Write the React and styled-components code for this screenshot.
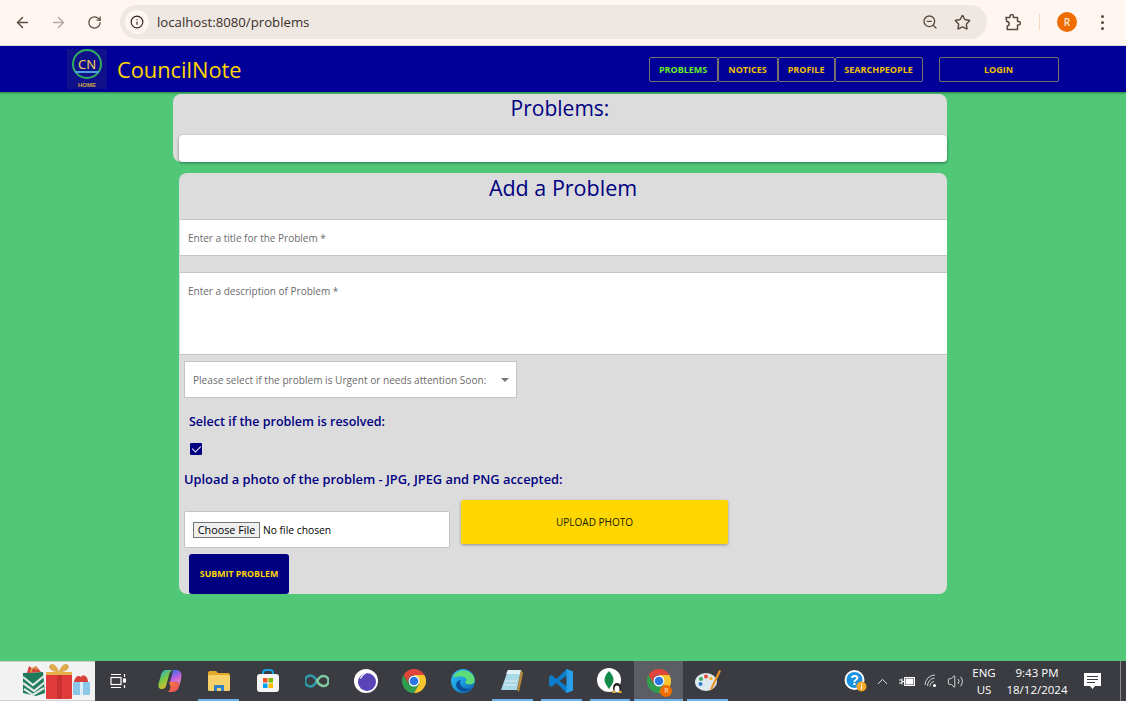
import React from 'react';
import styled, { createGlobalStyle } from 'styled-components';
import { ArrowLeft, ArrowRight, RotateCw, Info, ZoomOut, Star, ChevronUp, Volume2 } from 'lucide-react';

const UI_FONT = `"Open Sans", "Noto Sans", "Liberation Sans", sans-serif`;

const NAV_ITEMS = [
  { label: 'Problems', width: 69, active: true },
  { label: 'Notices', width: 60 },
  { label: 'Profile', width: 57 },
  { label: 'SearchPeople', width: 88 },
];

function App() {
  return (
    <Page>
      <GlobalStyle />
      <BrowserBar>
        <BarIcon $color="#5a4a3f"><ArrowLeft size={17} /></BarIcon>
        <BarIcon $color="#b5aaa3"><ArrowRight size={17} /></BarIcon>
        <BarIcon $color="#5a4a3f"><RotateCw size={15} /></BarIcon>
        <UrlPill>
          <SiteInfo><Info size={14} color="#2e2622" /></SiteInfo>
          <UrlText>localhost:8080/problems</UrlText>
          <PillIcons>
            <ZoomOut size={16} color="#5a4a3f" />
            <Star size={17} color="#5a4a3f" />
          </PillIcons>
        </UrlPill>
        <BrowserRight>
          <svg width="17" height="17" viewBox="0 0 17 17" fill="none" stroke="#5a4a3f" strokeWidth="1.500" strokeLinejoin="round">
            <path d="M1 3.500h4V2.300a1.700 1.700 0 013.400 0v1.200h4.100v4h1.200a1.700 1.700 0 010 3.400h-1.200V15.500H2.200V12c1.500 0 2-1 2-2.200S3.300 7.500 1.800 7.500z" />
          </svg>
          <BarDivider />
          <Avatar>R</Avatar>
          <MenuDots><i /><i /><i /></MenuDots>
        </BrowserRight>
      </BrowserBar>

      <NavBar>
        <LogoBox>
          <svg width="34" height="40" viewBox="0 0 34 40">
            <circle cx="17" cy="15" r="14" fill="#10108a" stroke="#2fae5f" strokeWidth="2" />
            <text x="17" y="20" textAnchor="middle" fontSize="13" fontFamily="Noto Sans, sans-serif" fill="#f0d060">CN</text>
            <rect x="5" y="22" width="24" height="2" fill="#4aa3e0" />
            <text x="17" y="38" textAnchor="middle" fontSize="6" fontWeight="700" fontFamily="Liberation Sans, sans-serif" fill="#c9a93a">HOME</text>
          </svg>
        </LogoBox>
        <Brand>CouncilNote</Brand>
        <NavLinks>
          {NAV_ITEMS.map(item => (
            <NavButton key={item.label} $width={item.width} $active={item.active}>{item.label}</NavButton>
          ))}
        </NavLinks>
        <LoginButton>Login</LoginButton>
      </NavBar>

      <Main>
        <ProblemsCard>
          <CardTitle>Problems:</CardTitle>
          <EmptyList />
        </ProblemsCard>

        <FormCard>
          <FormTitle>Add a Problem</FormTitle>
          <TitleInput placeholder="Enter a title for the Problem *" />
          <DescInput placeholder="Enter a description of Problem *" />
          <SelectWrap>
            <Select defaultValue="">
              <option value="" disabled>Please select if the problem is Urgent or needs attention Soon:</option>
              <option>Urgent</option>
              <option>Soon</option>
            </Select>
            <Caret />
          </SelectWrap>
          <ResolvedLabel>Select if the problem is resolved:</ResolvedLabel>
          <CheckRow><Check type="checkbox" defaultChecked /></CheckRow>
          <UploadLabel>Upload a photo of the problem - JPG, JPEG and PNG accepted:</UploadLabel>
          <UploadRow>
            <FileBox><input type="file" /></FileBox>
            <UploadButton>Upload Photo</UploadButton>
          </UploadRow>
          <SubmitButton>Submit Problem</SubmitButton>
        </FormCard>
      </Main>

      <Taskbar>
        <StartArea>
          <svg width="74" height="36" viewBox="0 0 74 36">
            <path d="M5 10l20-1 2 21-9 3-13-3z" fill="#1f7a5a" />
            <path d="M5 14l10 8 11-9M5 20l11 8 11-9M6 26l9 6 11-7" stroke="#dfe8e4" strokeWidth="2.200" fill="none" />
            <path d="M9 10l2-7 4 3 3-3 5 6z" fill="#d8403a" />
            <path d="M13 9c0-5 5-6 6-2" fill="none" stroke="#d9a74a" strokeWidth="1.500" />
            <rect x="28" y="9" width="26" height="27" rx="1" fill="#e03a3a" />
            <rect x="39" y="9" width="5" height="27" fill="#c93030" />
            <rect x="28" y="9" width="26" height="3" fill="#e8b04a" />
            <path d="M41 9c-7 0-12-4-9-7s8 2 9 7c1-5 6-10 9-7s-2 7-9 7z" fill="#dbab4e" />
            <rect x="55" y="19" width="17" height="13" rx="1" fill="#8cc7ea" />
            <rect x="62" y="19" width="3" height="13" fill="#dceef9" />
            <path d="M56 19c1-6 5-7 7-5 2-3 7-1 7 5z" fill="#d8403a" />
          </svg>
        </StartArea>
        <TaskView>
          <svg width="16" height="16" viewBox="0 0 16 16" fill="none" stroke="#fff" strokeWidth="1.200">
            <path d="M1 1.500h10M1 14.500h10" />
            <rect x="1" y="4.500" width="10" height="7" />
            <path d="M14.500 1v3M14.500 12v3" />
            <rect x="13.500" y="6" width="2" height="3" fill="#fff" />
          </svg>
        </TaskView>
        <TaskApp>
          <svg width="24" height="24" viewBox="0 0 24 24">
            <defs>
              <linearGradient id="cp" x1="0" y1="0" x2="0.600" y2="1">
                <stop offset="0" stopColor="#19b5e8" />
                <stop offset="0.5" stopColor="#7ac943" />
                <stop offset="1" stopColor="#f5b52e" />
              </linearGradient>
              <linearGradient id="cp2" x1="0.300" y1="0" x2="0.700" y2="1">
                <stop offset="0" stopColor="#3a6ff0" />
                <stop offset="0.5" stopColor="#c05fe0" />
                <stop offset="1" stopColor="#f08ab0" />
              </linearGradient>
              <linearGradient id="cp3" x1="0" y1="0" x2="1" y2="1">
                <stop offset="0" stopColor="#f5862e" />
                <stop offset="1" stopColor="#e8476a" />
              </linearGradient>
            </defs>
            <path d="M8 1h8c-3 0-4 1.500-5 5l-3 11c-.5 2-2 3-4 3-3 0-4-2-3.500-5L3 6c.7-3 2.500-5 5-5z" fill="url(#cp)" />
            <path d="M15 1h3c3.500 0 5.800 2.500 5.500 6-.3 3-1 6-2 9-.8-2-2-3-4.500-3h-5l2-7c.5-2.500 1-5 1-5z" fill="url(#cp2)" />
            <path d="M11 13h5c3 0 5 1 5.500 3-.7 4-3 7-7 7H8c3 0 4-2 4.500-5z" fill="url(#cp3)" />
          </svg>
        </TaskApp>
        <TaskApp $underline>
          <svg width="22" height="20" viewBox="0 0 22 20">
            <path d="M0 2c0-1 .5-2 2-2h6l2 2h10c1 0 2 1 2 2v2H0z" fill="#e3a92c" />
            <rect y="4" width="22" height="16" rx="1.500" fill="#f7d26a" />
            <path d="M7 14h8a1 1 0 011 1v5H6v-5a1 1 0 011-1z" fill="#2f80c9" />
            <rect x="9" y="17" width="4" height="3" fill="#f7d26a" />
          </svg>
        </TaskApp>
        <TaskApp>
          <svg width="24" height="24" viewBox="0 0 24 24">
            <path d="M7 6V4a3 3 0 013-3h4a3 3 0 013 3v2" fill="none" stroke="#1ba1e2" strokeWidth="2" />
            <rect x="1" y="5" width="22" height="18" rx="3" fill="#f5f5f5" />
            <rect x="7" y="9" width="4.500" height="4.500" fill="#f25022" />
            <rect x="12.500" y="9" width="4.500" height="4.500" fill="#7fba00" />
            <rect x="7" y="14.500" width="4.500" height="4.500" fill="#00a4ef" />
            <rect x="12.500" y="14.500" width="4.500" height="4.500" fill="#ffb900" />
          </svg>
        </TaskApp>
        <TaskApp>
          <svg width="24" height="14" viewBox="0 0 24 14" fill="none" strokeWidth="2.600">
            <path d="M12 7C10 3.500 8 1.500 5.500 1.500a5.500 5.500 0 000 11C8 12.500 10 10.500 12 7z" stroke="#2c9aa8" />
            <path d="M12 7c2-3.500 4-5 6.500-5a5 5 0 010 10C16 12 14 10.500 12 7z" stroke="#7fc8a0" />
          </svg>
        </TaskApp>
        <TaskApp>
          <svg width="24" height="24" viewBox="0 0 24 24">
            <circle cx="12" cy="12" r="12" fill="#fff" />
            <circle cx="13" cy="13" r="9" fill="#5a45b8" />
            <path d="M6 9c1-3 4-5 7-5-2 1-5 3-6 6z" fill="#fff" />
          </svg>
        </TaskApp>
        <TaskApp><ChromeIcon /></TaskApp>
        <TaskApp>
          <svg width="24" height="24" viewBox="0 0 24 24">
            <defs>
              <linearGradient id="edge" x1="0" y1="0" x2="1" y2="1">
                <stop offset="0" stopColor="#35c1f1" />
                <stop offset="0.5" stopColor="#1b9de2" />
                <stop offset="1" stopColor="#0c59a4" />
              </linearGradient>
            </defs>
            <circle cx="12" cy="12" r="12" fill="url(#edge)" />
            <path d="M2 8C5 1 15-1 21 5c3 3 3 7 2 9-2 2-8 2-9-1 2-1 2-4-1-5-4-1-8 0-11 0z" fill="#5fdc7a" />
            <path d="M9 13c0 5 5 8 11 6-4 6-14 4-15-3 0-2 2-5 5-5z" fill="#0b4f9a" />
          </svg>
        </TaskApp>
        <TaskApp $underline>
          <svg width="24" height="24" viewBox="0 0 24 24">
            <path d="M8 1h13l-4 20H1z" fill="#a9d8e6" />
            <path d="M8 1h13l-1 4H6z" fill="#dff2f8" />
            <path d="M21 1l2 3-4 19-2-2z" fill="#b98a3e" />
            <path d="M5 12h12M4 16h12" stroke="#dff2f8" strokeWidth="1" />
          </svg>
        </TaskApp>
        <TaskApp $underline>
          <svg width="24" height="24" viewBox="0 0 24 24">
            <path d="M17.500 0L7.500 10 2.500 6 0 7.500v9L2.500 18l5-4 10 10 6.500-2.500v-19z" fill="#0d7cc9" />
            <path d="M18 6.500v11L10.500 12z" fill="#3a3c42" />
            <path d="M17.500 0L24 2.500v19L17.500 24z" fill="#2aa0ea" />
          </svg>
        </TaskApp>
        <TaskApp $underline>
          <svg width="26" height="26" viewBox="0 0 26 26">
            <circle cx="12" cy="12" r="12" fill="#fff" />
            <path d="M12 3c3 3 4.500 6 4.500 9S14 18 12 21c-2-3-4.500-6-4.500-9S9 6 12 3z" fill="#13894a" />
            <ellipse cx="20" cy="20" rx="4" ry="5" fill="#1c1c1c" />
            <ellipse cx="20" cy="21" rx="2.500" ry="3.500" fill="#fff" />
            <path d="M15 25h4l-2-3zM21 25h4l-2-3z" fill="#f5b52e" />
          </svg>
        </TaskApp>
        <TaskApp $underline $active>
          <ChromeIcon />
          <ChromeBadge>R</ChromeBadge>
        </TaskApp>
        <TaskApp $underline>
          <svg width="26" height="26" viewBox="0 0 26 26">
            <ellipse cx="11" cy="14" rx="11" ry="9" fill="#dfeaf0" />
            <circle cx="6" cy="11" r="2" fill="#3aa655" />
            <circle cx="11" cy="8.500" r="2" fill="#e04a3a" />
            <circle cx="5.500" cy="16" r="2" fill="#2f80c9" />
            <circle cx="16" cy="10.500" r="1.800" fill="#f5b52e" />
            <path d="M24 2l-9 19 2 1 9-19z" fill="#e8942a" />
          </svg>
        </TaskApp>

        <Tray>
          <HelpIcon>
            <svg width="24" height="24" viewBox="0 0 24 24">
              <circle cx="11.500" cy="11" r="10" fill="#fff" />
              <circle cx="11.500" cy="11" r="8" fill="#1b8fe0" />
              <text x="11.500" y="16" textAnchor="middle" fontSize="14" fontWeight="700" fontFamily="Liberation Sans, sans-serif" fill="#fff">?</text>
              <circle cx="18.500" cy="17.500" r="5" fill="#f5a623" />
              <rect x="18" y="14.500" width="1.200" height="1.500" fill="#fff" />
              <rect x="18" y="16.800" width="1.200" height="3.700" fill="#fff" />
            </svg>
          </HelpIcon>
          <TrayIcon $width={25}><ChevronUp size={17} color="#fff" strokeWidth={1.200} /></TrayIcon>
          <TrayIcon $width={24}>
            <svg width="17" height="11" viewBox="0 0 17 11" fill="none" stroke="#fff" strokeWidth="1">
              <rect x="5.500" y="1.500" width="10" height="8" />
              <rect x="7" y="3" width="7" height="5" fill="#fff" />
              <path d="M0 4h3M0 7h3M3 2.500v6M3 5.500h3" />
            </svg>
          </TrayIcon>
          <TrayIcon $width={24}>
            <svg width="14" height="14" viewBox="0 0 14 14" fill="none" stroke="#cfd2d4" strokeWidth="1">
              <path d="M1 11a10 10 0 0110-10M3.500 12a8 8 0 017-8M6 12.500a5 5 0 014-5" />
              <circle cx="10.500" cy="11.500" r="1.500" fill="#fff" stroke="none" />
            </svg>
          </TrayIcon>
          <TrayIcon $width={24}><Volume2 size={17} color="#fff" strokeWidth={1.100} /></TrayIcon>
          <TrayLang>ENG<br />US</TrayLang>
          <TrayClock>9:43 PM<br />18/12/2024</TrayClock>
          <TrayIcon $width={38}>
            <svg width="17" height="17" viewBox="0 0 17 17">
              <path d="M0 0h17v13h-6l-2.500 3L6 13H0z" fill="#fff" />
              <path d="M3 3.500h11M3 6.500h11M3 9.500h8" stroke="#3a3c42" strokeWidth="1" />
            </svg>
          </TrayIcon>
          <ShowDesktop />
        </Tray>
      </Taskbar>
      <BottomStrip />
    </Page>
  );
}

function ChromeIcon() {
  return (
    <svg width="24" height="24" viewBox="0 0 24 24">
      <path d="M1.600 6A12 12 0 0012 24l5.200-9H6.800z" fill="#2f9e4f" />
      <path d="M22.400 6H12l5.200 9L12 24A12 12 0 0022.400 6z" fill="#f7c52e" />
      <path d="M1.600 6A12 12 0 0122.400 6H12a6 6 0 00-5.200 9z" fill="#e0443a" />
      <circle cx="12" cy="12" r="5.500" fill="#fff" />
      <circle cx="12" cy="12" r="4.300" fill="#2b78e4" />
    </svg>
  );
}

export default App;

const GlobalStyle = createGlobalStyle`
  html, body {
    margin: 0;
    padding: 0;
    height: 100%;
    overflow: hidden;
  }
  body {
    font-family: ${UI_FONT};
  }
  * {
    box-sizing: border-box;
  }
`;

const Page = styled.div`
  display: flex;
  flex-direction: column;
  height: 703px;
  background: #50c878;
`;

const BrowserBar = styled.div`
  display: flex;
  align-items: center;
  height: 46px;
  flex-shrink: 0;
  padding: 0 0 1px 4px;
  background: #fff6f2;
  border-bottom: 1px solid #e8e0dc;
`;

const BarIcon = styled.div`
  display: flex;
  align-items: center;
  justify-content: center;
  width: 36px;
  color: ${props => props.$color};
`;

const UrlPill = styled.div`
  display: flex;
  align-items: center;
  width: 867px;
  height: 34px;
  margin-left: 8px;
  padding: 0 16px 0 5px;
  background: #efe7e2;
  border-radius: 17px;
`;

const SiteInfo = styled.div`
  display: flex;
  align-items: center;
  justify-content: center;
  width: 24px;
  height: 24px;
  background: #fff6f2;
  border-radius: 50%;
`;

const UrlText = styled.span`
  margin-left: 8px;
  font-size: 13.200px;
  color: #3a2f28;
`;

const PillIcons = styled.div`
  display: flex;
  align-items: center;
  gap: 16px;
  margin-left: auto;
`;

const BrowserRight = styled.div`
  display: flex;
  align-items: center;
  margin-left: 18px;
`;

const BarDivider = styled.div`
  width: 1px;
  height: 16px;
  margin: 0 17px;
  background: #f7d9bf;
`;

const Avatar = styled.div`
  display: flex;
  align-items: center;
  justify-content: center;
  width: 20px;
  height: 20px;
  font-size: 10px;
  font-weight: 600;
  color: #ffe9d6;
  background: #ef6c00;
  border-radius: 50%;
`;

const MenuDots = styled.div`
  display: flex;
  flex-direction: column;
  gap: 3px;
  margin-left: 24px;
  i {
    display: block;
    width: 3px;
    height: 3px;
    background: #5a4a3f;
    border-radius: 50%;
  }
`;

const NavBar = styled.nav`
  display: flex;
  align-items: center;
  height: 46px;
  flex-shrink: 0;
  padding-left: 67px;
  background: #000099;
  box-shadow: 0 1px 2px rgba(0, 60, 0, 0.5);
`;

const LogoBox = styled.div`
  display: flex;
  align-items: center;
  justify-content: center;
  width: 40px;
  height: 40px;
  background: #10108a;
`;

const Brand = styled.span`
  margin-left: 10px;
  font-size: 21.800px;
  color: #ffd700;
`;

const NavLinks = styled.div`
  display: flex;
  margin-left: 407px;
`;

const NavButton = styled.button`
  width: ${props => props.$width}px;
  height: 25px;
  padding: 0;
  font-family: ${UI_FONT};
  font-size: 9px;
  font-weight: 700;
  text-transform: uppercase;
  color: ${props => (props.$active ? '#66ee22' : '#f2c200')};
  background: transparent;
  border: 1px solid #77706f;
  border-radius: 2px;
`;

const LoginButton = styled(NavButton)`
  width: 120px;
  margin-left: 16px;
`;

const Main = styled.main`
  flex: 1;
  padding: 2px 0 0 173px;
`;

const ProblemsCard = styled.section`
  width: 774px;
  padding-top: 1px;
  background: #dcdcdc;
  border-radius: 8px;
`;

const CardTitle = styled.h2`
  margin: 0;
  height: 40px;
  font-size: 21px;
  font-weight: 400;
  line-height: 26px;
  text-align: center;
  color: #000080;
`;

const EmptyList = styled.div`
  height: 27px;
  margin-left: 6px;
  background: #fff;
  border-radius: 4px;
  box-shadow: 0 1px 3px rgba(0, 0, 0, 0.45);
`;

const FormCard = styled.section`
  display: flex;
  flex-direction: column;
  align-items: flex-start;
  width: 768px;
  height: 421px;
  margin: 11px 0 0 6px;
  background: #dcdcdc;
  border-radius: 8px;
`;

const FormTitle = styled.h2`
  width: 100%;
  height: 46px;
  margin: 0;
  font-size: 21.500px;
  font-weight: 400;
  line-height: 30px;
  text-align: center;
  color: #000080;
`;

const TitleInput = styled.input`
  width: 767px;
  height: 37px;
  margin-left: 1px;
  padding: 2px 8px 0;
  font-family: ${UI_FONT};
  font-size: 10px;
  background: #fff;
  border: none;
  border-top: 1px solid #c4c4c4;
  border-bottom: 1px solid #c4c4c4;
  outline: none;
  &::placeholder {
    color: #6b6b6b;
  }
`;

const DescInput = styled.textarea`
  display: block;
  width: 767px;
  height: 84px;
  margin: 16px 0 0 1px;
  padding: 11px 8px;
  font-family: ${UI_FONT};
  font-size: 10px;
  background: #fff;
  border: none;
  border-top: 1px solid #c4c4c4;
  border-bottom: 1px solid #c4c4c4;
  outline: none;
  resize: none;
  &::placeholder {
    color: #6b6b6b;
  }
`;

const SelectWrap = styled.div`
  position: relative;
  margin: 6px 0 0 5px;
`;

const Select = styled.select`
  display: block;
  width: 333px;
  height: 37px;
  padding: 0 8px;
  font-family: ${UI_FONT};
  font-size: 10.100px;
  color: #6b6b6b;
  background: #fff;
  border: 1px solid #c4c4c4;
  border-radius: 0;
  appearance: none;
  outline: none;
`;

const Caret = styled.span`
  position: absolute;
  top: 17px;
  right: 8px;
  border-top: 4px solid #777;
  border-left: 4px solid transparent;
  border-right: 4px solid transparent;
`;

const ResolvedLabel = styled.label`
  margin: 15px 0 0 10px;
  font-size: 12.500px;
  font-weight: 600;
  line-height: 18px;
  color: #000080;
`;

const CheckRow = styled.div`
  display: flex;
  height: 13px;
  margin: 12px 0 0 11px;
`;

const Check = styled.input`
  position: relative;
  width: 12px;
  height: 12px;
  margin: 0;
  appearance: none;
  background: #000080;
  border-radius: 1px;
  &:checked::after {
    content: '';
    position: absolute;
    left: 4px;
    top: 1px;
    width: 4px;
    height: 7px;
    border: solid #fff;
    border-width: 0 1px 1px 0;
    transform: rotate(45deg);
  }
`;

const UploadLabel = styled.label`
  margin: 14px 0 0 5px;
  font-size: 12.850px;
  font-weight: 600;
  line-height: 18px;
  color: #000080;
`;

const UploadRow = styled.div`
  display: flex;
  align-items: flex-start;
  margin: 12px 0 0 5px;
`;

const FileBox = styled.div`
  display: flex;
  align-items: center;
  width: 266px;
  height: 37px;
  margin-top: 11px;
  padding-left: 8px;
  background: #fff;
  border: 1px solid #c4c4c4;
  border-radius: 2px;
  input {
    width: 240px;
    font-family: ${UI_FONT};
    font-size: 10.300px;
  }
  input::file-selector-button {
    width: 67px;
    height: 16px;
    margin-right: 3px;
    padding: 0;
    font-family: ${UI_FONT};
    font-size: 10.800px;
    line-height: 14px;
    color: #000;
    background: #efefef;
    border: 1px solid #767676;
    border-radius: 0;
  }
`;

const UploadButton = styled.button`
  width: 267px;
  height: 44px;
  margin-left: 11px;
  font-family: ${UI_FONT};
  font-size: 10px;
  text-transform: uppercase;
  color: #1a1a00;
  background: #ffd700;
  border: none;
  border-radius: 2px;
  box-shadow: 0 1px 3px rgba(0, 0, 0, 0.35);
`;

const SubmitButton = styled.button`
  width: 100px;
  height: 40px;
  margin: 6px 0 0 10px;
  font-family: ${UI_FONT};
  font-size: 8.800px;
  font-weight: 700;
  text-transform: uppercase;
  color: #ffd700;
  background: #000080;
  border: none;
  border-radius: 3px;
`;

const Taskbar = styled.footer`
  display: flex;
  align-items: stretch;
  height: 40px;
  flex-shrink: 0;
  margin-top: auto;
  background: #3a3c42;
`;

const StartArea = styled.div`
  display: flex;
  align-items: center;
  justify-content: flex-end;
  width: 95px;
  padding-right: 3px;
  background: #f2f2f2;
  border-top: 1px solid #cfcfcf;
  border-bottom: 1px solid #cfcfcf;
`;

const TaskView = styled.div`
  display: flex;
  align-items: center;
  justify-content: center;
  width: 50.500px;
  padding-right: 5px;
`;

const TaskApp = styled.div`
  position: relative;
  display: flex;
  align-items: center;
  justify-content: center;
  width: 48.900px;
  background: ${props => (props.$active ? '#5c5e64' : 'transparent')};
  &::after {
    content: '';
    display: ${props => (props.$underline ? 'block' : 'none')};
    position: absolute;
    left: ${props => (props.$active ? '0' : '4px')};
    right: ${props => (props.$active ? '0' : '4px')};
    bottom: 0;
    height: 2px;
    background: #6cb2e8;
  }
`;

const ChromeBadge = styled.span`
  position: absolute;
  right: 11px;
  bottom: 4px;
  width: 12px;
  height: 12px;
  font-size: 7px;
  line-height: 12px;
  text-align: center;
  color: #ffe9d6;
  background: #ef6c00;
  border-radius: 50%;
`;

const Tray = styled.div`
  display: flex;
  align-items: center;
  margin-left: auto;
  color: #fff;
`;

const HelpIcon = styled.div`
  display: flex;
  align-items: center;
  margin-right: 3px;
`;

const TrayIcon = styled.div`
  display: flex;
  align-items: center;
  justify-content: center;
  width: ${props => props.$width}px;
`;

const TrayLang = styled.div`
  width: 34px;
  font-size: 11.500px;
  line-height: 17px;
  text-align: center;
`;

const TrayClock = styled.div`
  width: 72px;
  font-size: 11.500px;
  line-height: 17px;
  text-align: center;
`;

const ShowDesktop = styled.div`
  align-self: stretch;
  width: 15px;
  padding-left: 9px;
  &::before {
    content: '';
    display: block;
    width: 1px;
    height: 100%;
    background: #8a8c90;
  }
`;

const BottomStrip = styled.div`
  height: 2px;
  flex-shrink: 0;
  background: #fff;
`;
